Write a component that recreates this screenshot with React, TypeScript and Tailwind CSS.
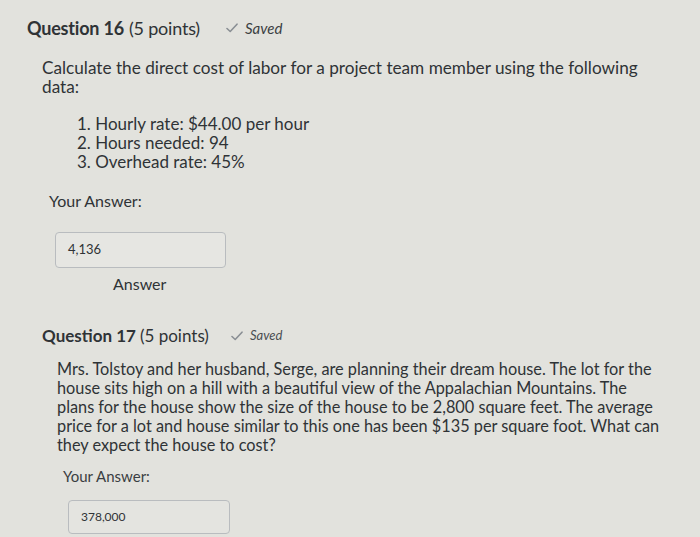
import React from "react";

function Check() {
  return (
    <svg width="12" height="10" viewBox="0 0 12 10" className="inline-block">
      <path d="M1 5.5 L4.2 8.5 L11 1.2" fill="none" stroke="#8a8f94" strokeWidth="1.6" strokeLinecap="round" strokeLinejoin="round" />
    </svg>
  );
}

export default function App() {
  return (
    <div
      className="w-[700px] h-[537px] overflow-hidden bg-[#e2e2dd] text-[#2f3336]"
      style={{ fontFamily: "Lato, 'Open Sans', sans-serif" }}
    >
      <div className="pl-[27px] pt-[16px]">
        <div className="flex items-center h-[24px]">
          <span className="text-[18px] font-bold tracking-[-0.2px]">Question 16</span>
          <span className="text-[18px] ml-[5px] tracking-[-0.2px]">(5 points)</span>
          <span className="ml-[26px] flex items-center gap-[7px]">
            <Check />
            <span className="italic text-[15px] text-[#3a3e42]">Saved</span>
          </span>
        </div>
        <div className="ml-[15px] mt-[18px] w-[610px] text-[17.2px] leading-[19px]">
          Calculate the direct cost of labor for a project team member using the following
          <br />
          data:
        </div>
        <ol className="ml-[50px] mt-[18px] text-[17px] leading-[19px]">
          <li>1. Hourly rate: $44.00 per hour</li>
          <li>2. Hours needed: 94</li>
          <li>3. Overhead rate: 45%</li>
        </ol>
        <div className="ml-[22px] mt-[20px] text-[16px] leading-[20px]">Your Answer:</div>
        <div className="ml-[28px] mt-[21px] w-[171px] h-[36px] rounded-[4px] border border-[#b9bcbf] bg-[#e6e6e2] flex items-center pl-[12px] text-[13px]">
          4,136
        </div>
        <div className="ml-[86px] mt-[6px] text-[16px] leading-[20px]">Answer</div>
      </div>
      <div className="pl-[42px] pt-[31px]">
        <div className="flex items-center h-[22px]">
          <span className="text-[17px] font-bold">Question 17</span>
          <span className="text-[17px] ml-[4px]">(5 points)</span>
          <span className="ml-[22px] flex items-center gap-[7px]">
            <Check />
            <span className="italic text-[13px] text-[#4a4e52]">Saved</span>
          </span>
        </div>
        <div className="ml-[15px] mt-[12px] w-[620px] text-[16.3px] leading-[19px]">
          Mrs. Tolstoy and her husband, Serge, are planning their dream house. The lot for the
          <br />
          house sits high on a hill with a beautiful view of the Appalachian Mountains. The
          <br />
          plans for the house show the size of the house to be 2,800 square feet. The average
          <br />
          price for a lot and house similar to this one has been $135 per square foot. What can
          <br />
          they expect the house to cost?
        </div>
        <div className="ml-[21px] mt-[12px] text-[15px] leading-[20px] text-[#3a3e42]">Your Answer:</div>
        <div className="ml-[26px] mt-[14px] w-[162px] h-[34px] rounded-[4px] border border-[#b9bcbf] bg-[#e4e4e0] flex items-center pl-[12px] text-[12px]">
          378,000
        </div>
      </div>
    </div>
  );
}
